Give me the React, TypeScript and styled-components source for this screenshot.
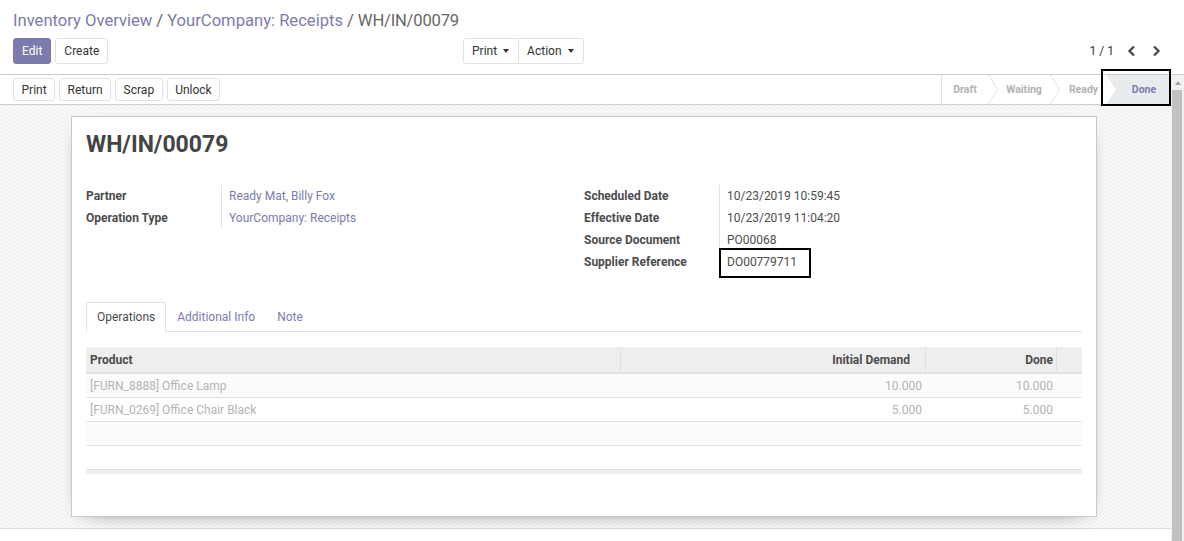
import React from 'react';
import styled, { createGlobalStyle } from 'styled-components';

const PRIMARY = '#7c7bad';
const TEXT = '#4c4c4c';
const LINE = '#dee2e6';

const GlobalStyle = createGlobalStyle`
  * { box-sizing: border-box; }
  html, body { margin: 0; padding: 0; }
  body {
    width: 1184px;
    height: 541px;
    overflow: hidden;
    font-family: Roboto, "Liberation Sans", Arial, sans-serif;
    font-size: 12px;
    color: ${TEXT};
    background: #ffffff;
  }
`;

const Page = styled.div`
  position: relative;
  display: flex;
  flex-direction: column;
  height: 541px;
`;

const ControlPanel = styled.div`
  height: 75px;
  padding: 9px 15px 0 13px;
  border-bottom: 1px solid #cccccc;
  background: #ffffff;
`;

const Breadcrumb = styled.div`
  display: flex;
  align-items: center;
  height: 24px;
  font-size: 16.6px;
  line-height: 24px;
`;

const Crumb = styled.span<{ $active?: boolean }>`
  color: ${p => (p.$active ? '#666666' : PRIMARY)};
  letter-spacing: ${p => (p.$active ? '-0.2px' : 'normal')};
`;

const CrumbSep = styled.span`
  color: #666666;
  padding: 0 4px;
`;

const ButtonsRow = styled.div`
  display: flex;
  align-items: center;
  margin-top: 5px;
  height: 26px;
`;

const LeftButtons = styled.div`
  display: flex;
  gap: 4px;
  width: 450px;
`;

const MiddleButtons = styled.div`
  display: flex;
  flex: 1;
`;

const Btn = styled.button<{ $primary?: boolean; $h?: number; $px?: number }>`
  height: ${p => p.$h ?? 26}px;
  padding: 0 ${p => p.$px ?? 8}px;
  font-family: inherit;
  font-size: 12px;
  line-height: 1;
  border: 1px solid ${p => (p.$primary ? PRIMARY : LINE)};
  background: ${p => (p.$primary ? PRIMARY : '#ffffff')};
  color: ${p => (p.$primary ? '#ffffff' : '#333333')};
  border-radius: 3px;
  cursor: pointer;
`;

const GroupBtn = styled(Btn)<{ $first?: boolean }>`
  display: flex;
  align-items: center;
  padding: 0 9px 0 8px;
  border-radius: ${p => (p.$first ? '3px 0 0 3px' : '0 3px 3px 0')};
  margin-left: ${p => (p.$first ? 0 : -1)}px;
`;

const Caret = styled.span`
  display: inline-block;
  margin-left: 6px;
  border-top: 4px solid #333333;
  border-left: 3.5px solid transparent;
  border-right: 3.5px solid transparent;
`;

const Pager = styled.div`
  display: flex;
  align-items: center;
`;

const PagerValue = styled.span`
  margin-right: 5px;
  color: #333333;
`;

const PagerBtn = styled.button`
  width: 25px;
  height: 26px;
  display: flex;
  align-items: center;
  justify-content: center;
  border: none;
  background: transparent;
  padding: 0;
  color: ${TEXT};
`;

const Body = styled.div`
  display: flex;
  flex: 1;
  min-height: 0;
`;

const Main = styled.div`
  flex: 1;
  display: flex;
  flex-direction: column;
`;

const StatusBar = styled.div`
  display: flex;
  align-items: center;
  justify-content: space-between;
  height: 30px;
  padding-left: 13px;
  border-bottom: 1px solid #cccccc;
  background: #ffffff;
`;

const StatusButtons = styled.div`
  display: flex;
  gap: 4px;
`;

const Steps = styled.div`
  display: flex;
  align-self: stretch;
  border-left: 1px solid ${LINE};
`;

const Step = styled.div<{ $w: number; $current?: boolean }>`
  width: ${p => p.$w}px;
  display: flex;
  align-items: center;
  justify-content: center;
  font-size: 10.5px;
  font-weight: bold;
  color: ${p => (p.$current ? PRIMARY : '#b2b2b2')};
  background: ${p => (p.$current ? '#e9ecef' : 'transparent')};
  padding-left: ${p => (p.$current ? 10 : 0)}px;
  clip-path: ${p =>
    p.$current ? 'polygon(0 0, 100% 0, 100% 100%, 0 100%, 10px 50%)' : 'none'};
  white-space: nowrap;
`;

const Chevron = styled.svg<{ $over?: boolean }>`
  flex: none;
  position: relative;
  z-index: 1;
  margin-right: ${p => (p.$over ? -10 : 0)}px;
`;

const SheetBg = styled.div`
  padding: 11px 0 11px 71px;
  border-bottom: 1px solid #d9d9d9;
  background-color: #f6f6f6;
  background-image: repeating-conic-gradient(#f1f1f1 0 25%, #fafafa 0 50%);
  background-size: 4px 4px;
`;

const Sheet = styled.div`
  width: 1026px;
  padding: 13px 14px 42px 14px;
  background: #ffffff;
  border: 1px solid #c8c8d3;
  box-shadow: 0 5px 20px -15px #000000;
`;

const Title = styled.h1`
  margin: 0;
  font-size: 23px;
  line-height: 29px;
  font-weight: bold;
  color: #444444;
`;

const Groups = styled.div`
  display: grid;
  grid-template-columns: 498px 498px;
  margin-top: 26px;
`;

const FieldGrid = styled.div`
  display: grid;
  grid-template-columns: 135px 1fr;
  grid-auto-rows: 22px;
  align-content: start;
`;

const Label = styled.div`
  font-weight: bold;
  line-height: 22px;
  color: ${TEXT};
`;

const Value = styled.div<{ $link?: boolean }>`
  line-height: 22px;
  padding-left: 7px;
  border-left: 1px solid #e2e2e2;
  color: ${p => (p.$link ? PRIMARY : TEXT)};
`;

const TabNav = styled.div`
  display: flex;
  height: 30px;
  margin-top: 29px;
  border-bottom: 1px solid ${LINE};
`;

const Tab = styled.div<{ $active?: boolean }>`
  height: 30px;
  padding: 0 10px;
  line-height: 28px;
  border: 1px solid ${p => (p.$active ? LINE : 'transparent')};
  border-bottom-color: ${p => (p.$active ? '#ffffff' : 'transparent')};
  border-radius: 3px 3px 0 0;
  background: ${p => (p.$active ? '#ffffff' : 'transparent')};
  color: ${p => (p.$active ? TEXT : PRIMARY)};
`;

const COLS = '534px 305px 131px 1fr';

const TableWrap = styled.div`
  margin-top: 15px;
`;

const HeadRow = styled.div`
  display: grid;
  grid-template-columns: ${COLS};
  height: 27px;
  background: #eeeeee;
  border-bottom: 2px solid ${LINE};
`;

const HeadCell = styled.div<{ $right?: boolean; $pr?: number; $first?: boolean }>`
  display: flex;
  align-items: center;
  justify-content: ${p => (p.$right ? 'flex-end' : 'flex-start')};
  padding: 0 ${p => p.$pr ?? 4}px 0 4px;
  font-weight: bold;
  color: ${TEXT};
  border-left: ${p => (p.$first ? 'none' : `1px solid ${LINE}`)};
`;

const Row = styled.div<{ $striped?: boolean }>`
  display: grid;
  grid-template-columns: ${COLS};
  height: 24px;
  border-bottom: 1px solid ${LINE};
  background: ${p => (p.$striped ? '#fcfcfc' : '#ffffff')};
`;

const Cell = styled.div<{ $right?: boolean }>`
  display: flex;
  align-items: center;
  justify-content: ${p => (p.$right ? 'flex-end' : 'flex-start')};
  padding: 0 3px 0 4px;
  color: #b3b3b3;
  white-space: nowrap;
`;

const Foot = styled.div`
  height: 4px;
  background: #eeeeee;
`;

const Chatter = styled.div`
  flex: 1;
  background: #ffffff;
`;

const ScrollBar = styled.div`
  width: 13px;
  display: flex;
  flex-direction: column;
  align-items: center;
  background: #f1f1f1;
`;

const ScrollArrow = styled.div`
  margin-top: 6px;
  border-bottom: 4px solid #a3a3a3;
  border-left: 3.5px solid transparent;
  border-right: 3.5px solid transparent;
`;

const ScrollThumb = styled.div`
  flex: 1;
  width: 10px;
  margin-top: 5px;
  margin-right: 1px;
  background: #c1c1c1;
`;

const Marker = styled.div<{ $x: number; $y: number; $w: number; $h: number }>`
  position: absolute;
  left: ${p => p.$x}px;
  top: ${p => p.$y}px;
  width: ${p => p.$w}px;
  height: ${p => p.$h}px;
  border: 2px solid #000000;
  pointer-events: none;
  z-index: 5;
`;

const ChevronIcon = ({ dir }: { dir: 'left' | 'right' }) => (
  <svg width="9" height="12" viewBox="0 0 9 12">
    <polyline
      points={dir === 'left' ? '7,1.5 2.5,6 7,10.5' : '2,1.5 6.5,6 2,10.5'}
      fill="none"
      stroke={TEXT}
      strokeWidth="2.4"
    />
  </svg>
);

const StepChevron = ({ over }: { over?: boolean }) => (
  <Chevron $over={over} width="10" height="29" viewBox="0 0 10 29">
    <polyline points="0.5,0 9.5,14.5 0.5,29" fill="none" stroke={LINE} strokeWidth="1" />
  </Chevron>
);

const moves = [
  { product: '[FURN_8888] Office Lamp', demand: '10.000', done: '10.000' },
  { product: '[FURN_0269] Office Chair Black', demand: '5.000', done: '5.000' },
];

export default function App() {
  return (
    <Page>
      <GlobalStyle />
      <ControlPanel>
        <Breadcrumb>
          <Crumb>Inventory Overview</Crumb>
          <CrumbSep>/</CrumbSep>
          <Crumb>YourCompany: Receipts</Crumb>
          <CrumbSep>/</CrumbSep>
          <Crumb $active>WH/IN/00079</Crumb>
        </Breadcrumb>
        <ButtonsRow>
          <LeftButtons>
            <Btn $primary>Edit</Btn>
            <Btn>Create</Btn>
          </LeftButtons>
          <MiddleButtons>
            <GroupBtn $first>
              Print<Caret />
            </GroupBtn>
            <GroupBtn>
              Action<Caret />
            </GroupBtn>
          </MiddleButtons>
          <Pager>
            <PagerValue>1 / 1</PagerValue>
            <PagerBtn>
              <ChevronIcon dir="left" />
            </PagerBtn>
            <PagerBtn>
              <ChevronIcon dir="right" />
            </PagerBtn>
          </Pager>
        </ButtonsRow>
      </ControlPanel>

      <Body>
        <Main>
          <StatusBar>
            <StatusButtons>
              <Btn $h={23} $px={7.5}>Print</Btn>
              <Btn $h={23} $px={7.5}>Return</Btn>
              <Btn $h={23} $px={7.5}>Scrap</Btn>
              <Btn $h={23} $px={7.5}>Unlock</Btn>
            </StatusButtons>
            <Steps>
              <Step $w={46}>Draft</Step>
              <StepChevron />
              <Step $w={52}>Waiting</Step>
              <StepChevron />
              <Step $w={47}>Ready</Step>
              <StepChevron over />
              <Step $w={64} $current>
                Done
              </Step>
            </Steps>
          </StatusBar>

          <SheetBg>
            <Sheet>
              <Title>WH/IN/00079</Title>
              <Groups>
                <FieldGrid>
                  <Label>Partner</Label>
                  <Value $link>Ready Mat, Billy Fox</Value>
                  <Label>Operation Type</Label>
                  <Value $link>YourCompany: Receipts</Value>
                </FieldGrid>
                <FieldGrid>
                  <Label>Scheduled Date</Label>
                  <Value>10/23/2019 10:59:45</Value>
                  <Label>Effective Date</Label>
                  <Value>10/23/2019 11:04:20</Value>
                  <Label>Source Document</Label>
                  <Value>PO00068</Value>
                  <Label>Supplier Reference</Label>
                  <Value>DO00779711</Value>
                </FieldGrid>
              </Groups>

              <TabNav>
                <Tab $active>Operations</Tab>
                <Tab>Additional Info</Tab>
                <Tab>Note</Tab>
              </TabNav>

              <TableWrap>
                <HeadRow>
                  <HeadCell $first>Product</HeadCell>
                  <HeadCell $right $pr={15}>
                    Initial Demand
                  </HeadCell>
                  <HeadCell $right $pr={3}>
                    Done
                  </HeadCell>
                  <HeadCell />
                </HeadRow>
                {moves.map((m, i) => (
                  <Row key={m.product} $striped={i % 2 === 0}>
                    <Cell>{m.product}</Cell>
                    <Cell $right>{m.demand}</Cell>
                    <Cell $right>{m.done}</Cell>
                    <Cell />
                  </Row>
                ))}
                <Row $striped>
                  <Cell />
                </Row>
                <Row>
                  <Cell />
                </Row>
                <Foot />
              </TableWrap>
            </Sheet>
          </SheetBg>
          <Chatter />
        </Main>
        <ScrollBar>
          <ScrollArrow />
          <ScrollThumb />
        </ScrollBar>
      </Body>

      <Marker $x={1101} $y={69} $w={70} $h={37} />
      <Marker $x={719} $y={248} $w={92} $h={30} />
    </Page>
  );
}
